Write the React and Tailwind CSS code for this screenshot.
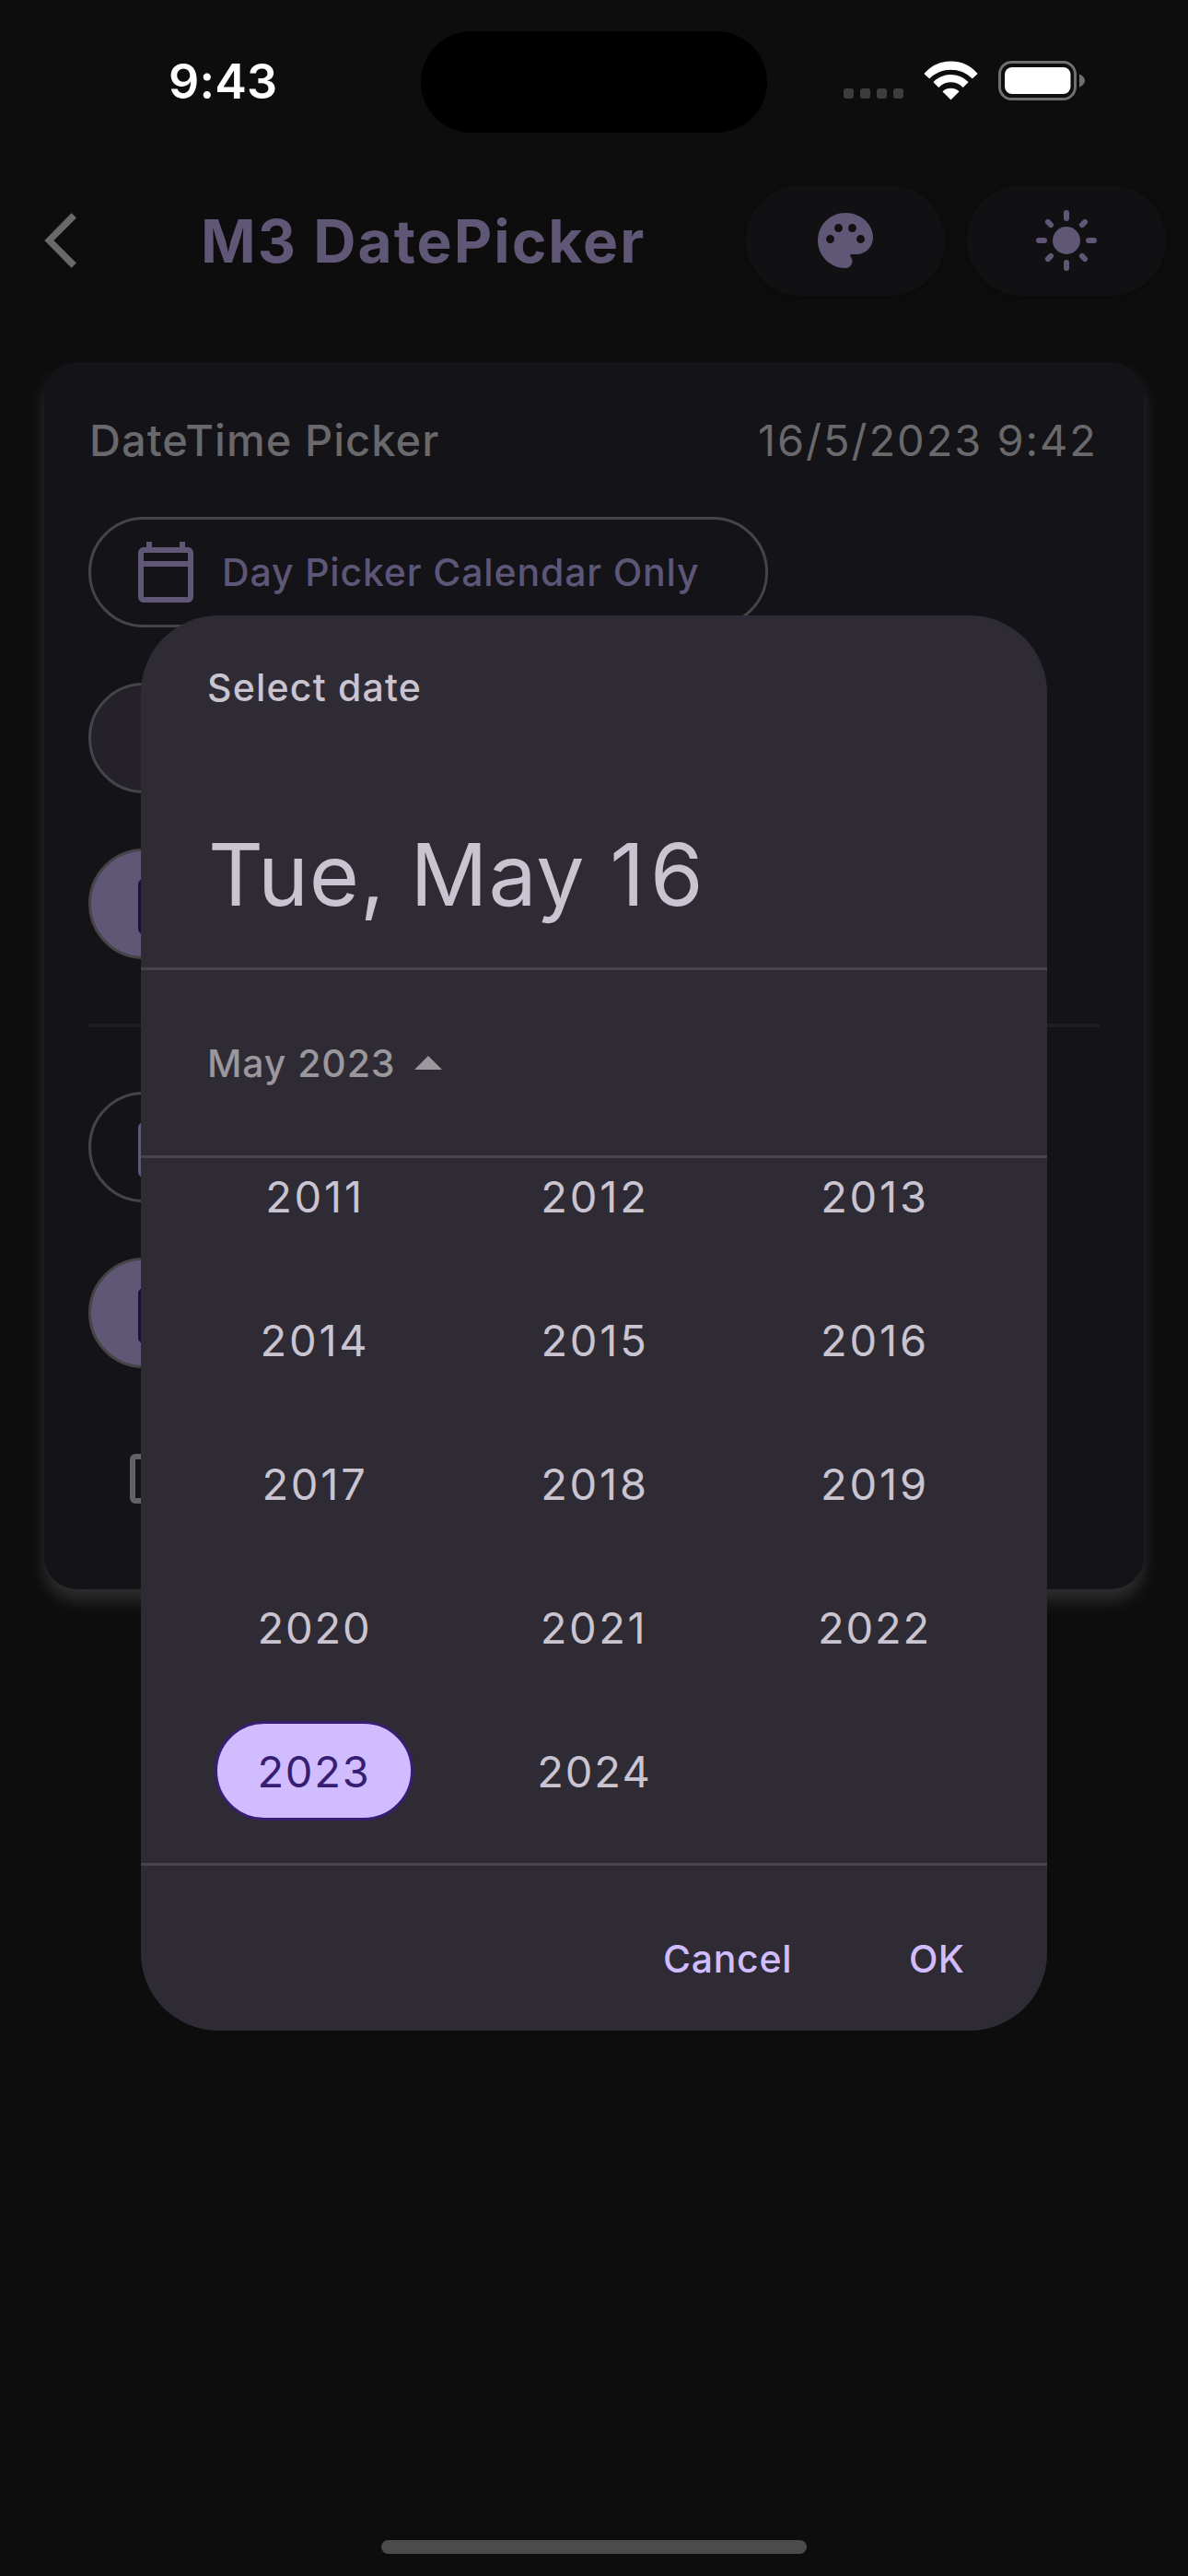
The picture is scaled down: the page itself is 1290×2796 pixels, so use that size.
function WifiIcon() {
  return (
    <svg width="60" height="44" viewBox="0 0 60 44" fill="#fff" stroke="#fff" strokeWidth="1.2" strokeLinejoin="round">
      <path d="M1.3 15A37.5 37.5 0 0 1 57.7 15L52.8 19.6A33.5 33.5 0 0 0 6.2 19.6Z" />
      <path d="M11.2 24.2A26 26 0 0 1 47.8 24.2L42.8 29.2A19 19 0 0 0 16.2 29.2Z" />
      <path d="M21.2 34.4A12.5 12.5 0 0 1 37.8 34.4L29.5 42.6Z" />
    </svg>
  );
}

function BatteryIcon() {
  return (
    <svg width="96" height="43" viewBox="0 0 96 43" fill="none">
      <rect x="1.5" y="1.5" width="82" height="40" rx="13" stroke="#6f6f70" strokeWidth="3" />
      <rect x="7" y="7" width="71.5" height="29" rx="8" fill="#fff" />
      <path d="M88 14.5C91.5 15.8 94 18.6 94 21.5S91.5 27.2 88 28.5Z" fill="#6f6f70" />
    </svg>
  );
}

function BackIcon() {
  return (
    <svg width="36" height="60" viewBox="0 0 36 60" fill="#6a696a">
      <path d="M29.6 0.3L35 5.6L10.4 30L35 54.4L29.6 59.7L0.3 30Z" />
    </svg>
  );
}

function PaletteIcon() {
  return (
    <svg width="72" height="72" viewBox="0 0 24 24" fill="#605676">
      <path d="M12,2C6.49,2,2,6.49,2,12s4.49,10,10,10c1.38,0,2.5-1.12,2.5-2.5c0-0.61-0.23-1.2-0.64-1.67c-0.08-0.1-0.13-0.21-0.13-0.33c0-0.28,0.22-0.5,0.5-0.5H16c3.31,0,6-2.69,6-6C22,6.04,17.51,2,12,2z M17.5,13c-0.83,0-1.5-0.67-1.5-1.5c0-0.83,0.67-1.5,1.5-1.5s1.5,0.67,1.5,1.5C19,12.33,18.33,13,17.5,13z M14.5,9C13.67,9,13,8.33,13,7.5C13,6.67,13.67,6,14.5,6S16,6.67,16,7.5C16,8.33,15.33,9,14.5,9z M5,11.5C5,10.67,5.67,10,6.5,10S8,10.67,8,11.5C8,12.33,7.33,13,6.5,13S5,12.33,5,11.5z M11,7.5C11,8.33,10.33,9,9.5,9S8,8.33,8,7.5C8,6.67,8.67,6,9.5,6S11,6.67,11,7.5z" />
    </svg>
  );
}

function SunIcon() {
  return (
    <svg width="72" height="72" viewBox="0 0 24 24" className="overflow-visible" stroke="#605676" strokeWidth="2" strokeLinecap="round">
      <circle cx="12" cy="12" r="5" fill="#605676" stroke="none" />
      <path d="M12 2v2M12 20v2M2 12h2M20 12h2M5.3 5.3l1.05 1.05M17.65 17.65l1.05 1.05M18.7 5.3l-1.05 1.05M6.35 17.65L5.3 18.7" />
    </svg>
  );
}

function CalendarIcon({ color }) {
  return (
    <svg width="72" height="72" viewBox="0 0 24 24" fill={color} className="shrink-0">
      <path d="M20 3h-1V1h-2v2H7V1H5v2H4c-1.1 0-2 .9-2 2v16c0 1.1.9 2 2 2h16c1.1 0 2-.9 2-2V5c0-1.1-.9-2-2-2zM4 5h16v3H4zM20 21H4V10h16z" fillRule="evenodd" />
    </svg>
  );
}

function StatusBar() {
  return (
    <div className="flex h-[177px] items-center pl-[183px]">
      <div className="w-[274px] text-[52px] leading-[60px] font-semibold tracking-[0.2px] text-white">9:43</div>
      <div className="h-[110px] w-[376px] rounded-full bg-black" />
      <div className="mt-[26px] ml-[83px] flex gap-[7px]">
        {[0, 1, 2, 3].map((dot) => (
          <div key={dot} className="size-[11px] rounded-[3px] bg-[#3d3d3e]" />
        ))}
      </div>
      <div className="mt-[-3px] ml-[22px]">
        <WifiIcon />
      </div>
      <div className="mt-[-3px] ml-[21px]">
        <BatteryIcon />
      </div>
    </div>
  );
}

function Header() {
  return (
    <div className="flex h-[168px] items-center pl-[48px]">
      <div className="w-[170px]">
        <BackIcon />
      </div>
      <h1 className="w-[592px] pt-px text-[64px] leading-[80px] font-bold tracking-[2.05px] whitespace-nowrap text-[#605676]">M3 DatePicker</h1>
      <div className="flex gap-6">
        <button className="flex h-[120px] w-[216px] items-center justify-center rounded-full bg-[#111113] shadow-[0_4px_8px_rgba(0,0,0,0.15)]">
          <PaletteIcon />
        </button>
        <button className="flex h-[120px] w-[216px] items-center justify-center rounded-full bg-[#111113] shadow-[0_4px_8px_rgba(0,0,0,0.15)]">
          <SunIcon />
        </button>
      </div>
    </div>
  );
}

const pill = "flex h-[120px] w-[738px] items-center rounded-full border-3 border-[#454447] pl-[45px]";

function PickerCard() {
  return (
    <div className="mx-12 mt-12 flex h-[1332px] flex-col rounded-[36px] bg-[#141318] px-12 pt-12 shadow-[0_12px_18px_rgba(255,255,255,0.14)]">
      <div className="flex h-[75px] items-center justify-between whitespace-nowrap text-[#69686a]">
        <div className="pl-px text-[47px] font-medium tracking-[1.05px]">DateTime Picker</div>
        <div className="pr-[2px] text-[47px] tracking-[1.96px]">16/5/2023 9:42</div>
      </div>
      <div className="mt-[45px] flex flex-col gap-[60px]">
        <button className={pill}>
          <CalendarIcon color="#605676" />
          <span className="pt-[2px] pl-[25px] text-[41px] font-medium tracking-[0.85px] whitespace-nowrap text-[#5e5677]">Day Picker Calendar Only</span>
        </button>
        <button className={pill + " bg-[#24212a]"} />
        <button className={pill + " bg-[#605676]"}>
          <CalendarIcon color="#1c1039" />
        </button>
      </div>
      <div className="my-[70px] h-[4px] shrink-0 bg-[#1e1d22]" />
      <div className="flex flex-col gap-[60px]">
        <button className={pill}>
          <CalendarIcon color="#605676" />
        </button>
        <button className={pill + " bg-[#605676]"}>
          <CalendarIcon color="#1c1039" />
        </button>
        <div className="flex h-[120px] items-center pl-[45px]">
          <div className="h-[54px] w-[54px] rounded-[6px] border-6 border-[#636165]" />
        </div>
      </div>
    </div>
  );
}

const years = [2011, 2012, 2013, 2014, 2015, 2016, 2017, 2018, 2019, 2020, 2021, 2022, 2023, 2024];

function YearCell({ year }) {
  if (year === 2023) {
    return (
      <div className="mb-[3px] flex items-center justify-center">
        <div className="flex h-[108px] w-[216px] items-center justify-center rounded-full border-3 border-[#381e72] bg-[#d0bcff] pt-[2px] text-[#381e72]">{year}</div>
      </div>
    );
  }
  const spacing = year < 2020 ? "tracking-[2.8px] pl-[2px]" : year === 2021 ? "tracking-[2.6px]" : "tracking-[1.8px] pl-px";
  return <div className={"flex items-center justify-center " + spacing}>{year}</div>;
}

function YearDialog() {
  return (
    <div className="absolute top-[668px] left-[153px] flex h-[1536px] w-[984px] flex-col overflow-hidden rounded-[84px] bg-[#2f2b35]">
      <div className="h-[385px] border-b-3 border-[#48444e] pt-12 pl-[72px] text-[#cac4d0]">
        <div className="text-[41px] leading-[60px] font-medium tracking-[1.2px]">Select date</div>
        <div className="mt-[117px] pl-px text-[93px] leading-[112px] tracking-[0.85px]">
          Tue, May <span className="tracking-[6px]">1</span>6
        </div>
      </div>
      <div className="flex h-[204px] items-center border-b-3 border-[#48444e] pl-[72px] text-[41px] font-medium tracking-[0.9px] text-[#9b979d]">
        <span className="pt-[2px]">May 2023</span>
        <svg width="30" height="15" viewBox="0 0 30 15" className="ml-[21px]">
          <path d="M0 15L15 0L30 15Z" fill="#9b979d" />
        </svg>
      </div>
      <div className="h-[768px] overflow-hidden border-b-3 border-[#48444e] px-9">
        <div className="mt-[-36px] grid auto-rows-[156px] grid-cols-3 text-[47px] leading-[60px] tracking-[1.8px] text-[#cac4d0] [font-kerning:none]">
          {years.map((year) => (
            <YearCell key={year} year={year} />
          ))}
        </div>
      </div>
      <div className="flex flex-1 items-center justify-end pt-6 text-[41px] font-medium text-[#d0bcff]">
        <button className="w-[267px] text-left tracking-[0.7px]">Cancel</button>
        <button className="w-[150px] text-left tracking-[0.2px]">OK</button>
      </div>
    </div>
  );
}

export default function App() {
  return (
    <div className="relative flex h-[2796px] w-[1290px] flex-col overflow-hidden bg-[#0d0d0e] font-['Inter',sans-serif]">
      <StatusBar />
      <Header />
      <PickerCard />
      <YearDialog />
      <div className="mt-auto mb-6 h-[15px] w-[462px] self-center rounded-full bg-[#4b4b4b]" />
    </div>
  );
}
